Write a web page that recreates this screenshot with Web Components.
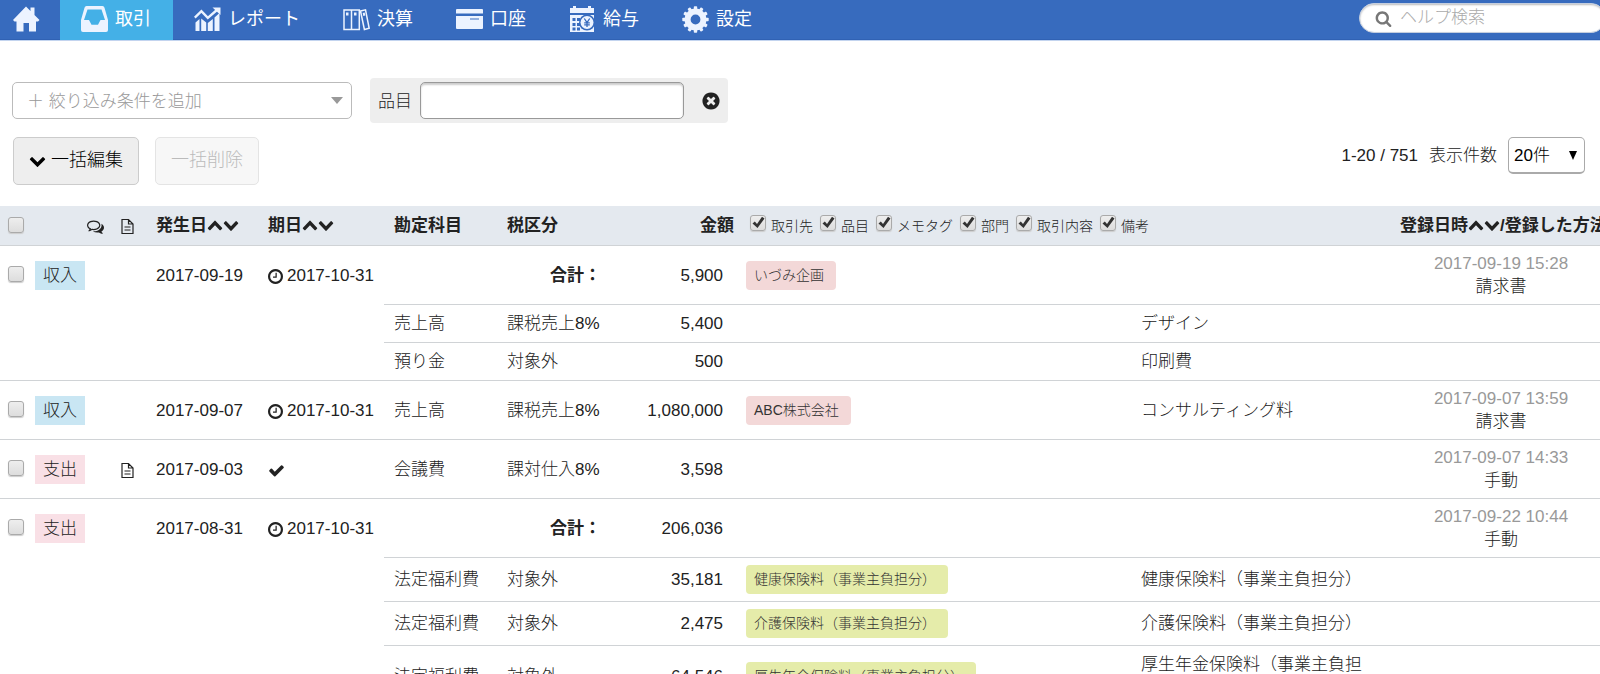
<!DOCTYPE html>
<html lang="ja">
<head>
<meta charset="utf-8">
<title>取引</title>
<style>
  html, body { margin: 0; }
  body {
    background: #fff;
    color: #222;
    font: 300 17px/23px "Liberation Sans", "Noto Sans CJK JP", sans-serif;
    overflow-x: hidden;
  }
</style>
</head>
<body>
<book-app></book-app>

<template id="t-app">
  <style>
    :host { display: block; overflow: hidden; }
    .bar { display: flex; align-items: flex-start; padding: 38px 12px 0; gap: 18px; }
    .actions { display: flex; align-items: flex-start; padding: 14px 15px 21px 13px; gap: 16px; }
    .pager { display: flex; align-items: center; gap: 11px; margin-left: auto; }
  </style>
  <nav-bar>
    <nav-item icon="home" label="ホーム"></nav-item>
    <nav-item icon="inbox" active>取引</nav-item>
    <nav-item icon="chart">レポート</nav-item>
    <nav-item icon="binders">決算</nav-item>
    <nav-item icon="card">口座</nav-item>
    <nav-item icon="calendar">給与</nav-item>
    <nav-item icon="gear">設定</nav-item>
    <help-search slot="end"></help-search>
  </nav-bar>
  <main>
    <div class="bar">
      <condition-select></condition-select>
      <filter-field>品目</filter-field>
    </div>
    <div class="actions">
      <action-button icon="down">一括編集</action-button>
      <action-button disabled>一括削除</action-button>
      <div class="pager"><span>1-20 / 751</span><page-size></page-size></div>
    </div>
    <deal-table></deal-table>
  </main>
</template>

<template id="t-nav">
  <style>
    :host { display: block; }
    nav { display: flex; height: 39px; background: #376bbe; border-bottom: 1px solid #3062b4; box-shadow: 0 1px #c3d4ef; color: #fff; }
    .end { margin-left: auto; padding-top: 3px; }
  </style>
  <nav><slot></slot><div class="end"><slot name="end"></slot></div></nav>
</template>

<template id="t-nav-item">
  <style>
    :host { display: block; height: 40px; font-size: 18px; font-weight: 400; }
    :host([active]) { background: #44b0e7; }
    a { display: flex; gap: 7px; height: 38px; padding: 0 22px 0 21px; color: #fff; text-decoration: none; }
    :host([label]) a { padding: 0 20px 0 13px; }
    ui-icon { width: 27px; height: 27px; margin-top: 6px; color: #ecf3ff; }
    span { line-height: 38px; }
    :host([label]) span { display: none; }
  </style>
  <a href="#"><ui-icon></ui-icon><span><slot></slot></span></a>
</template>

<template id="t-search">
  <style>
    :host { display: block; margin-right: -6px; }
    label { display: flex; align-items: center; gap: 8px; box-sizing: border-box; width: 247px; height: 30px; padding: 0 15px; border: 1px solid #c4cede; border-radius: 15px; background: #fff; box-shadow: inset 0 1px 2px #bbb; }
    ui-icon { width: 17px; height: 17px; color: #777; flex: none; }
    input { flex: 1; min-width: 0; padding: 0; border: 0; outline: 0; background: none; font: inherit; height: 28px; }
    input::placeholder { color: #aaa; opacity: 1; }
  </style>
  <label><ui-icon name="search"></ui-icon><input type="text" placeholder="ヘルプ検索" aria-label="ヘルプ検索"></label>
</template>

<template id="t-condition">
  <style>
    :host { display: grid; align-items: center; width: 340px; margin-top: 4px; }
    select, ui-icon { grid-area: 1 / 1; }
    select { appearance: none; width: 100%; height: 37px; padding: 2px 14px 0; border: 1px solid #bbb; border-radius: 5px; background: #fff; color: #999; font: inherit; }
    ui-icon { justify-self: end; width: 12px; height: 7px; margin-right: 9px; color: #999; pointer-events: none; }
  </style>
  <select aria-label="絞り込み条件"><option>＋ 絞り込み条件を追加</option></select>
  <ui-icon name="caret"></ui-icon>
</template>

<template id="t-filter">
  <style>
    :host { display: block; }
    .box { display: flex; align-items: center; height: 45px; padding: 0 7px 0 8px; background: #eee; border-radius: 4px; box-sizing: border-box; }
    label { margin: 2px 8px 0 0; }
    input { box-sizing: border-box; width: 264px; height: 37px; border: 1px solid #999; border-radius: 5px; background: #fff; box-shadow: inset 0 2px 2px #ccc; font: inherit; outline: 0; }
    button { display: flex; padding: 0; margin-left: 17px; border: 0; background: none; color: #222; }
    ui-icon { width: 20px; height: 20px; }
  </style>
  <div class="box">
    <label for="f"><slot></slot></label><input id="f" type="text">
    <button type="button" aria-label="条件を削除"><ui-icon name="close"></ui-icon></button>
  </div>
</template>

<template id="t-button">
  <style>
    :host { display: block; }
    button { display: flex; align-items: center; gap: 5px; height: 48px; padding: 0 15px 2px; border: 1px solid #ccc; border-radius: 5px; background: #eee; color: #000; font: inherit; font-size: 18px; }
    button:disabled { background: #f7f7f7; border-color: #e4e4e4; color: #bbb; }
    ui-icon { width: 17px; height: 17px; }
  </style>
  <button type="button"><span><slot></slot></span></button>
</template>

<template id="t-page-size">
  <style>
    :host { display: flex; align-items: center; gap: 11px; }
    .wrap { display: grid; align-items: center; }
    select, ui-icon { grid-area: 1 / 1; }
    select { appearance: none; width: 77px; height: 37px; padding: 1px 5px 0; border: 1px solid #aaa; border-bottom-width: 2px; border-radius: 5px; background: #fff; color: #000; font: inherit; }
    ui-icon { justify-self: end; width: 8px; height: 9px; margin-right: 8px; color: #000; pointer-events: none; }
  </style>
  <label for="n">表示件数</label>
  <div class="wrap"><select id="n"><option>20件</option></select><ui-icon name="caret"></ui-icon></div>
</template>

<template id="t-check">
  <style>
    :host { display: inline-flex; }
    label { display: flex; gap: 5px; font-size: 14px; line-height: 22px; font-weight: 300; }
    .wrap { display: grid; place-items: center; width: 16px; height: 16px; }
    input, ui-icon { grid-area: 1 / 1; }
    input { appearance: none; box-sizing: border-box; width: 16px; height: 16px; margin: 0; border: 1px solid #aaa; border-radius: 3px; background: linear-gradient(#eee, #ddd); box-shadow: 0 1px 1px #ccc; }
    ui-icon { width: 14px; height: 14px; color: #333; pointer-events: none; visibility: hidden; }
    input:checked + ui-icon { visibility: visible; }
    .text:empty { display: none; }
  </style>
  <label><span class="wrap"><input type="checkbox"><ui-icon name="tick"></ui-icon></span><span class="text"></span></label>
</template>

<template id="t-chip">
  <style>
    :host { display: flex; width: max-content; border-radius: 4px; background: #f3d8d8; color: #333; font-size: 14px; line-height: 29px; padding: 0 12px 0 8px; }
    :host([kind="item"]) { background: #e5ecaa; }
    :host([kind="in"]), :host([kind="out"]) { border-radius: 0; font-size: 17px; color: #222; padding: 0 8px; }
    :host([kind="in"]) { background: #c9e6f3; }
    :host([kind="out"]) { background: #f9e0e6; }
  </style>
  <slot></slot>
</template>

<template id="t-table">
  <style>
    :host { display: block; }
    table { table-layout: fixed; width: calc(100% + 24px); border-collapse: separate; border-spacing: 0; }
    th, td { padding: 7px 10px; text-align: left; vertical-align: middle; border-top: 1px solid #d0d3d6; }
    th { height: 39px; box-sizing: border-box; padding: 0 10px; background: #e4e9ef; border: 0; font-weight: 700; white-space: nowrap; }
    ui-icon { width: 17px; height: 17px; vertical-align: middle; }
    .sort { width: 16px; height: 17px; vertical-align: -2px; }
    .tight { padding-left: 0; padding-right: 0; }
    .check { padding-left: 8px; }
    .check check-box { vertical-align: middle; margin-bottom: 4px; }
    .blank { border: 0; }
    .due { white-space: nowrap; padding-right: 0; }
    .clock { width: 15px; height: 15px; margin-right: 4px; }
    .sum { text-align: right; padding-right: 19px; font-weight: 700; }
    .num { text-align: right; padding-right: 13px; }
    th.num { padding-right: 2px; }
    .opts { display: flex; gap: 7px; padding-left: 4px; }
    td.reg { text-align: center; padding-top: 6px; padding-bottom: 6px; }
    th.reg { padding-left: 22px; }
    .reg time { display: block; color: #999; }
  </style>
  <table>
    <colgroup>
      <col style="width:35px"><col style="width:52px"><col style="width:32px"><col style="width:27px">
      <col style="width:112px"><col style="width:126px"><col style="width:113px"><col style="width:123px"><col style="width:116px">
      <col><col style="width:247px"><col style="width:246px">
    </colgroup>
    <thead><tr>
      <th class="check tight"><check-box aria="すべて選択"></check-box></th><th></th>
      <th class="tight"><ui-icon name="comments"></ui-icon></th>
      <th class="tight"><ui-icon name="doc"></ui-icon></th>
      <th>発生日<ui-icon class="sort" name="up"></ui-icon><ui-icon class="sort" name="down"></ui-icon></th>
      <th>期日<ui-icon class="sort" name="up"></ui-icon><ui-icon class="sort" name="down"></ui-icon></th>
      <th>勘定科目</th><th>税区分</th><th class="num">金額</th>
      <th colspan="2"><div class="opts">
        <check-box checked>取引先</check-box><check-box checked>品目</check-box><check-box checked>メモタグ</check-box><check-box checked>部門</check-box><check-box checked>取引内容</check-box><check-box checked>備考</check-box>
      </div></th>
      <th class="reg">登録日時<ui-icon class="sort" name="up"></ui-icon><ui-icon class="sort" name="down"></ui-icon>/登録した方法</th>
    </tr></thead>
    <tbody></tbody>
  </table>
</template>

<script>
const gearTeeth = Array.from({ length: 12 }, (_, i) =>
  `<rect x="11.8" y="0.3" width="3.4" height="5" rx=".8" transform="rotate(${i * 30} 13.5 13.5)"/>`).join('');

const ICONS = {
  home: ['0 0 27 27', '<path d="M13 .5 17.500 5V1.500h4V9L26.500 14l-1.500 1.500H23V25.500H16V17H10.500v8.500H3.500V15.500H1.500L0 14z"/>'],
  inbox: ['0 0 27 27', '<path fill-rule="evenodd" d="M5.500 0h16q1.500 0 2 1.800L27 14v10q0 2-2 2H2q-2 0-2-2V14L3.500 1.800Q4 0 5.500 0zM6.500 3.500 3 14h5l2.500 4.800h6.500l2.500-4.800H24L20.500 3.500z"/>'],
  chart: ['0 0 27 27', '<path d="M1.500 16.500 5.500 13v12h-4zM7.200 12.500l5 4V25h-5zM13.800 17l5-4v12h-5zM20.500 11.500l5-4.500v18h-5z"/><path d="M.8 11.600 7.400 5.200l6.400 6.600L23.500 3.500" fill="none" stroke="currentColor" stroke-width="2.400"/><path d="M18.500 1.500H26.500v7.500z"/>'],
  binders: ['0 0 27 27', '<g fill="none" stroke="currentColor" stroke-width="1.500"><path d="M1 4h7.500v19.500H1zM8.500 4h7.800v19.500H8.500zM17.500 5l5-1.200 3.700 18.500-4.800 1.200z"/></g><path d="M3 6.500h2.500v3H3zM11 6.500h2.500v3H11zM19.700 7l2-.4.6 3-2 .4z"/>'],
  card: ['0 0 27 27', '<path d="M1 3h25q1 0 1 1v3.500H0V4q0-1 1-1z"/><path fill-rule="evenodd" d="M0 10h27v12q0 1-1 1H1q-1 0-1-1zM14 12.500v1h9v-1z"/>'],
  calendar: ['0 0 27 27', '<path d="M1 2h3V0h3v2h12V0h3v2h3v5H1zM1 9h24v17H1z"/><path d="M3.500 12h3v3h-3zM8 12h3v3H8zM3.500 17h3v3h-3zM8 17h3v3H8zM3.500 21.500h3v3h-3zM8 21.500h3v3H8z" fill="#376bbe"/><circle cx="18" cy="16.500" r="8" fill="#376bbe"/><circle cx="18" cy="16.500" r="6.500"/><path d="m15.300 12.500 2.700 4 2.700-4M18 16.500v4.500M15.200 16.800h5.600M15.200 18.800h5.600" fill="none" stroke="#376bbe" stroke-width="1.300"/>'],
  gear: ['0 0 27 27', `<circle cx="13.500" cy="13.500" r="7.900" fill="none" stroke="currentColor" stroke-width="6"/>${gearTeeth}`],
  caret: ['0 0 12 8', '<path d="M0 0h12L6 8z"/>'],
  tick: ['0 0 14 14', '<path d="M1.500 7.500 3.800 5.500 6 8 11 .8 13.500 2.500 6.500 12z"/>'],
  doc: ['0 0 17 17', '<path d="M3 1.500h6.500l4.500 4.500v9.500H3zM9.500 1.500V6H14M5.500 9h6M5.500 12h6" fill="none" stroke="currentColor" stroke-width="1.200"/>'],
  search: ['0 0 1792 1792', '<path d="M1216 832q0-185-131.500-316.500t-316.500-131.500-316.500 131.500-131.500 316.500 131.500 316.500 316.500 131.500 316.500-131.500 131.500-316.500zm512 832q0 52-38 90t-90 38q-54 0-90-38l-343-342q-179 124-399 124-143 0-273.500-55.500t-225-150-150-225-55.500-273.500 55.500-273.500 150-225 225-150 273.500-55.500 273.500 55.500 225 150 150 225 55.500 273.500q0 220-124 399l343 343q37 37 37 90z"/>'],
  close: ['0 0 1792 1792', '<path d="M1277 1122q0-26-19-45l-181-181 181-181q19-19 19-45 0-27-19-46l-90-90q-19-19-46-19-26 0-45 19l-181 181-181-181q-19-19-45-19-27 0-46 19l-90 90q-19 19-19 46 0 26 19 45l181 181-181 181q-19 19-19 45 0 27 19 46l90 90q19 19 46 19 26 0 45-19l181-181 181 181q19 19 45 19 27 0 46-19l90-90q19-19 19-46zm387-226q0 209-103 385.500t-279.500 279.500-385.500 103-385.500-103-279.500-279.500-103-385.500 103-385.500 279.500-279.500 385.500-103 385.500 103 279.500 279.500 103 385.500z"/>'],
  check: ['0 0 1792 1792', '<path d="M1671 566q0 40-28 68l-724 724-136 136q-28 28-68 28t-68-28l-136-136-362-362q-28-28-28-68t28-68l136-136q28-28 68-28t68 28l294 295 656-657q28-28 68-28t68 28l136 136q28 28 28 68z"/>'],
  clock: ['128 128 1536 1536', '<path d="M1024 544v448q0 14-9 23t-23 9h-320q-14 0-23-9t-9-23v-64q0-14 9-23t23-9h224v-352q0-14 9-23t23-9h64q14 0 23 9t9 23zm416 352q0-148-73-273t-198-198-273-73-273 73-198 198-73 273 73 273 198 198 273 73 273-73 198-198 73-273zm224 0q0 209-103 385.500t-279.500 279.500-385.500 103-385.500-103-279.500-279.500-103-385.500 103-385.500 279.500-279.500 385.500-103 385.500 103 279.500 279.500 103 385.500z"/>'],
  up: ['0 0 1792 1792', '<path d="M1683 1331l-166 165q-19 19-45 19t-45-19l-531-531-531 531q-19 19-45 19t-45-19l-166-165q-19-19-19-45.500t19-45.500l742-741q19-19 45-19t45 19l742 741q19 19 19 45.500t-19 45.500z"/>'],
  down: ['0 0 1792 1792', '<path d="M1683 808l-742 741q-19 19-45 19t-45-19l-742-741q-19-19-19-45.500t19-45.500l166-165q19-19 45-19t45 19l531 531 531-531q19-19 45-19t45 19l166 165q19 19 19 45.500t-19 45.500z"/>'],
  comments: ['0 0 1792 1792', '<path d="M704 384q-153 0-286 52t-211.500 141-78.500 191q0 82 53 158t149 132l97 56-35 84q34-20 62-39l44-31 53 10q78 14 153 14 153 0 286-52t211.500-141 78.500-191-78.500-191-211.500-141-286-52zm0-128q191 0 353.500 68.500t256.500 186.500 94 257-94 257-256.500 186.500-353.500 68.500q-86 0-176-16-124 88-278 128-36 9-86 16h-3q-11 0-20.500-8t-11.500-21q-1-3-1-6.500t.5-6.500 2-6l2.500-5 3.500-5.500 4-5 4.500-5 4-4.500q5-6 23-25t26-29.500 22.500-29 25-38.500 20.500-44q-124-72-195-177t-71-224q0-139 94-257t256.500-186.500 353.500-68.500zm822 1169q10 24 20.500 44t25 38.500 22.500 29 26 29.500 23 25q1 1 4 4.500t4.500 5 4 5 3.500 5.500l2.500 5 2 6 .5 6.500-1 6.500q-3 14-13 22t-22 7q-50-7-86-16-154-40-278-128-90 16-176 16-271 0-472-132 58 4 88 4 161 0 309-45t264-129q125-92 192-212t67-254q0-77-23-152 129 71 204 178t75 230q0 120-71 224.500t-195 176.500z"/>'],
};

class Base extends HTMLElement {
  constructor() {
    super();
    const root = this.attachShadow({ mode: 'open' });
    const id = this.constructor.template;
    if (id) root.append(document.getElementById(id).content.cloneNode(true));
  }
  $(selector) { return this.shadowRoot.querySelector(selector); }
}
const plain = id => class extends Base { static template = id; };

customElements.define('ui-icon', class extends Base {
  connectedCallback() {
    const [box, body] = ICONS[this.getAttribute('name')] || ['0 0 1 1', ''];
    this.shadowRoot.innerHTML = `<style>:host{display:inline-block}svg{display:block;width:100%;height:100%}</style>
      <svg viewBox="${box}" fill="currentColor" aria-hidden="true" preserveAspectRatio="none">${body}</svg>`;
  }
  static observedAttributes = ['name'];
  attributeChangedCallback() { if (this.isConnected) this.connectedCallback(); }
});

customElements.define('nav-item', class extends Base {
  static template = 't-nav-item';
  connectedCallback() {
    this.$('ui-icon').setAttribute('name', this.getAttribute('icon'));
    if (this.hasAttribute('label')) this.$('a').setAttribute('aria-label', this.getAttribute('label'));
  }
});

customElements.define('action-button', class extends Base {
  static template = 't-button';
  connectedCallback() {
    const button = this.$('button');
    button.disabled = this.hasAttribute('disabled');
    if (this.hasAttribute('icon')) {
      const icon = document.createElement('ui-icon');
      icon.setAttribute('name', this.getAttribute('icon'));
      button.prepend(icon);
    }
  }
});

customElements.define('check-box', class extends Base {
  static template = 't-check';
  connectedCallback() {
    const input = this.$('input');
    input.checked = this.hasAttribute('checked');
    if (this.hasAttribute('aria')) input.setAttribute('aria-label', this.getAttribute('aria'));
    this.$('.text').textContent = this.textContent;
  }
});

const DEALS = [
  { kind: 'in', date: '2017-09-19', due: '2017-10-31', total: '5,900', tag: 'いづみ企画', reg: '2017-09-19 15:28', by: '請求書',
    lines: [['売上高', '課税売上8%', '5,400', '', 'デザイン'], ['預り金', '対象外', '500', '', '印刷費']] },
  { kind: 'in', date: '2017-09-07', due: '2017-10-31', one: ['売上高', '課税売上8%', '1,080,000'], tag: 'ABC株式会社', note: 'コンサルティング料', reg: '2017-09-07 13:59', by: '請求書' },
  { kind: 'out', doc: true, date: '2017-09-03', one: ['会議費', '課対仕入8%', '3,598'], reg: '2017-09-07 14:33', by: '手動' },
  { kind: 'out', date: '2017-08-31', due: '2017-10-31', total: '206,036', reg: '2017-09-22 10:44', by: '手動',
    lines: [
      ['法定福利費', '対象外', '35,181', '健康保険料（事業主負担分）', '健康保険料（事業主負担分）'],
      ['法定福利費', '対象外', '2,475', '介護保険料（事業主負担分）', '介護保険料（事業主負担分）'],
      ['法定福利費', '対象外', '64,546', '厚生年金保険料（事業主負担分）', '厚生年金保険料（事業主負担分）'],
    ] },
];
const chip = (kind, text) => text ? `<tag-chip kind="${kind}">${text}</tag-chip>` : '';

customElements.define('deal-table', class extends Base {
  static template = 't-table';
  connectedCallback() {
    this.$('tbody').innerHTML = DEALS.map(d => {
      const [account, tax, amount] = d.one || ['', '合計：', d.total];
      const main = `<tr>
        <td class="check tight"><check-box aria="選択"></check-box></td>
        <td class="tight">${chip(d.kind, d.kind === 'in' ? '収入' : '支出')}</td>
        <td></td><td class="tight">${d.doc ? '<ui-icon name="doc"></ui-icon>' : ''}</td>
        <td>${d.date}</td>
        <td class="due">${d.due ? `<ui-icon class="clock" name="clock"></ui-icon>${d.due}` : '<ui-icon name="check"></ui-icon>'}</td>
        <td>${account}</td><td class="${d.one ? '' : 'sum'}">${tax}</td><td class="num">${amount}</td>
        <td>${chip('partner', d.tag)}</td><td>${d.note || ''}</td>
        <td class="reg"><time>${d.reg}</time>${d.by}</td></tr>`;
      const subs = (d.lines || []).map(([a, t, n, item, note]) => `<tr>
        <td class="blank" colspan="6"></td><td>${a}</td><td>${t}</td><td class="num">${n}</td>
        <td>${chip('item', item)}</td><td>${note}</td><td></td></tr>`).join('');
      return main + subs;
    }).join('');
  }
});

customElements.define('nav-bar', plain('t-nav'));
customElements.define('help-search', plain('t-search'));
customElements.define('condition-select', plain('t-condition'));
customElements.define('filter-field', plain('t-filter'));
customElements.define('page-size', plain('t-page-size'));
customElements.define('tag-chip', plain('t-chip'));
customElements.define('book-app', plain('t-app'));
</script>
</body>
</html>
